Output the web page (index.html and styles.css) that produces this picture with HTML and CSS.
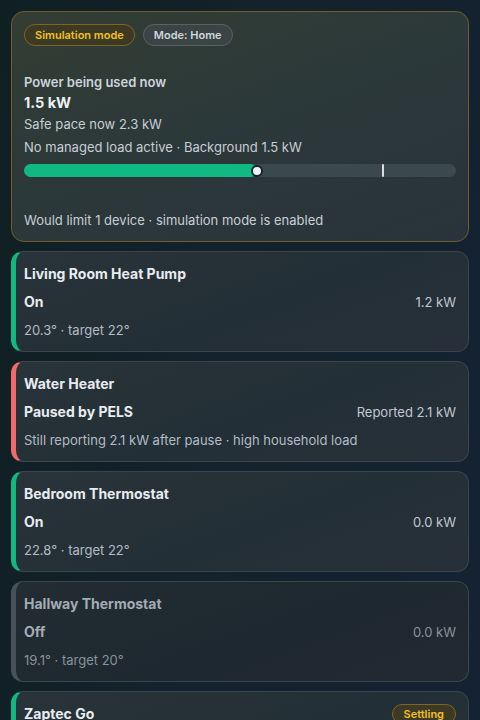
FILE: index.html
```html
<!DOCTYPE html>
<html lang="en">
<head>
<meta charset="utf-8">
<title>PELS</title>
<link rel="stylesheet" href="styles.css">
</head>
<body>
<main class="page">
  <section class="hero">
    <div class="pills">
      <span class="pill pill-sim">Simulation mode</span>
      <span class="pill pill-mode">Mode: Home</span>
    </div>
    <div class="hero-label">Power being used now</div>
    <div class="hero-value">1.5 kW</div>
    <div class="hero-line">Safe pace now 2.3 kW</div>
    <div class="hero-line">No managed load active · Background 1.5 kW</div>
    <div class="bar">
      <div class="bar-fill" style="width:54%"></div>
      <span class="bar-knob" style="left:54%"></span>
      <span class="bar-tick" style="left:83%"></span>
    </div>
    <div class="hero-foot">Would limit 1 device · simulation mode is enabled</div>
  </section>

  <section class="device on">
    <div class="d-title">Living Room Heat Pump</div>
    <div class="d-row"><span class="d-state">On</span><span class="d-power">1.2 kW</span></div>
    <div class="d-detail">20.3° · target 22°</div>
  </section>

  <section class="device paused">
    <div class="d-title">Water Heater</div>
    <div class="d-row"><span class="d-state">Paused by PELS</span><span class="d-power">Reported 2.1 kW</span></div>
    <div class="d-detail">Still reporting 2.1 kW after pause · high household load</div>
  </section>

  <section class="device on">
    <div class="d-title">Bedroom Thermostat</div>
    <div class="d-row"><span class="d-state">On</span><span class="d-power">0.0 kW</span></div>
    <div class="d-detail">22.8° · target 22°</div>
  </section>

  <section class="device off">
    <div class="d-title">Hallway Thermostat</div>
    <div class="d-row"><span class="d-state">Off</span><span class="d-power">0.0 kW</span></div>
    <div class="d-detail">19.1° · target 20°</div>
  </section>

  <section class="device on">
    <div class="d-head"><span class="d-title">Zaptec Go</span><span class="pill pill-sim pill-small">Settling</span></div>
    <div class="d-row"><span class="d-state">Charging</span><span class="d-power">0.3 kW</span></div>
    <div class="d-detail">Waiting for power to settle</div>
  </section>
</main>
</body>
</html>
```

FILE: styles.css
```css
html, body {
  margin: 0;
  padding: 0;
}
body {
  min-height: 720px;
  background: linear-gradient(100deg, #0f1f22 0%, #13222c 45%, #152233 100%);
  font-family: Inter, "Noto Sans", "Liberation Sans", sans-serif;
  color: #e4e9ee;
}
.page {
  padding: 11px 11px 20px;
  display: flex;
  flex-direction: column;
  gap: 9px;
}
.hero {
  border: 1px solid #6e5f2a;
  border-radius: 13px;
  background: linear-gradient(160deg, #333d33 0%, #2c3939 45%, #29333b 100%);
  padding: 12px 12px 11px;
  display: flex;
  flex-direction: column;
}
.pills {
  display: flex;
  gap: 8px;
  margin-bottom: 26px;
}
.pill {
  display: inline-flex;
  align-items: center;
  box-sizing: border-box;
  height: 22px;
  padding: 0 10px;
  border-radius: 11px;
  font-size: 11px;
  font-weight: 600;
}
.pill-sim {
  color: #f0c020;
  background: #3c3a24;
  border: 1px solid #7d6622;
}
.pill-mode {
  color: #cfd6dc;
  background: #3a4444;
  border: 1px solid #586262;
}
.hero-label {
  font-size: 13px;
  font-weight: 600;
  color: #cdd4dc;
  line-height: 20px;
}
.hero-value {
  font-size: 14.5px;
  font-weight: 700;
  color: #eef1f4;
  line-height: 21px;
}
.hero-line {
  font-size: 13px;
  color: #c7ced6;
  line-height: 23px;
}
.bar {
  position: relative;
  height: 13px;
  margin-top: 5px;
  border-radius: 7px;
  background: #3b484c;
}
.bar-fill {
  height: 100%;
  border-radius: 7px;
  background: #10b981;
}
.bar-knob {
  position: absolute;
  top: 50%;
  width: 8px;
  height: 8px;
  margin: -6px 0 0 -6px;
  border-radius: 50%;
  background: #eef2f6;
  border: 2px solid #16242a;
}
.bar-tick {
  position: absolute;
  top: 0;
  width: 2px;
  height: 13px;
  margin-left: -1px;
  background: #d9dee3;
  border-radius: 1px;
}
.hero-foot {
  margin-top: 33px;
  font-size: 13px;
  color: #c7ced6;
  line-height: 20px;
}
.device {
  border: 1px solid #3a464d;
  border-left: 5px solid #10b981;
  border-radius: 12px;
  background: linear-gradient(160deg, #283439 0%, #232f36 55%, #27303a 100%);
  padding: 12px 12px 11px 8px;
  display: flex;
  flex-direction: column;
  gap: 8px;
}
.device.paused {
  border-left-color: #ef6b6b;
}
.device.off {
  border-left-color: #475159;
  background: linear-gradient(160deg, #222c32 0%, #1e2830 55%, #222a33 100%);
}
.d-head {
  display: flex;
  justify-content: space-between;
  align-items: center;
}
.d-title {
  font-size: 14px;
  font-weight: 700;
  color: #e8ecf0;
  line-height: 20px;
}
.d-row {
  display: flex;
  justify-content: space-between;
  align-items: center;
  line-height: 20px;
}
.d-state {
  font-size: 14px;
  font-weight: 700;
  color: #e8ecf0;
}
.d-power {
  font-size: 13px;
  color: #c0c8d0;
}
.d-detail {
  font-size: 13px;
  color: #b3bcc5;
  line-height: 20px;
}
.device.off .d-title,
.device.off .d-state {
  color: #a3acb4;
}
.device.off .d-power,
.device.off .d-detail {
  color: #88929a;
}
.pill-small {
  height: 20px;
  padding: 0 11px;
}
```
